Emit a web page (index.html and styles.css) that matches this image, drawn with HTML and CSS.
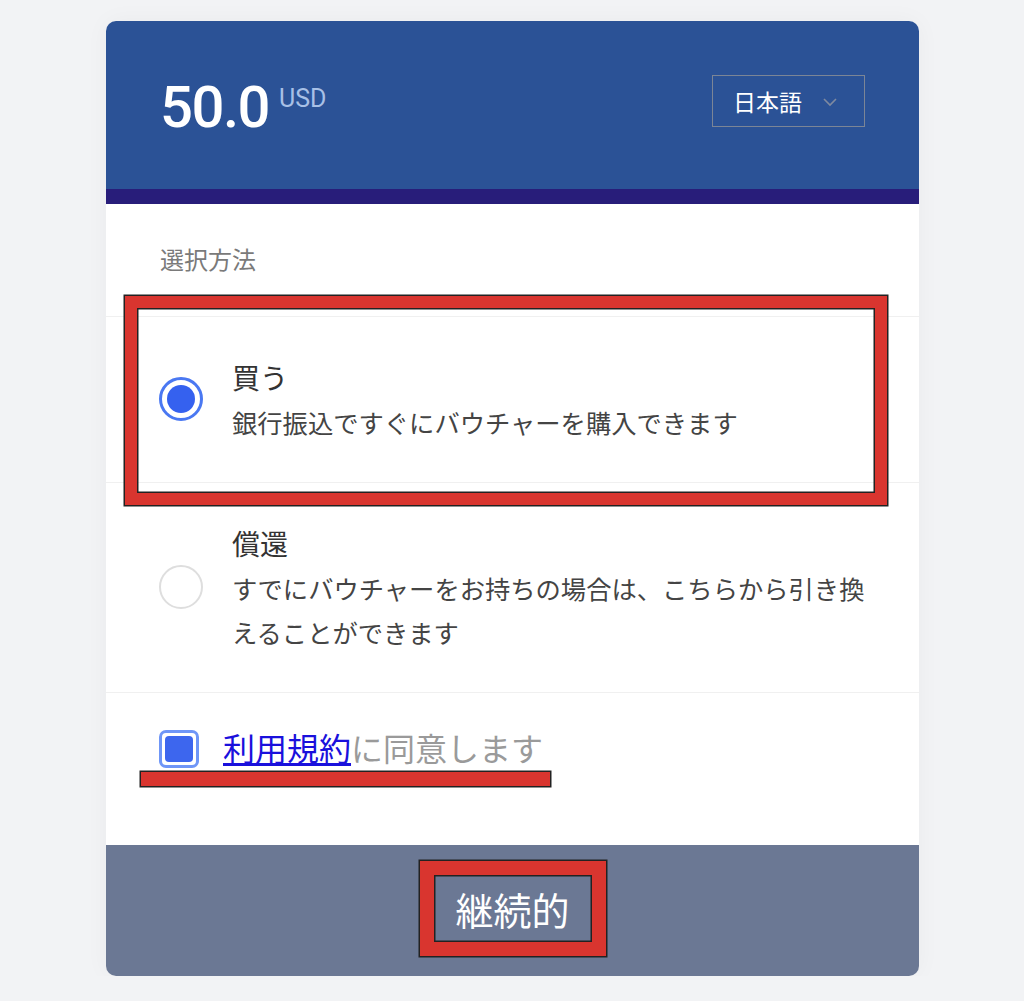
FILE: index.html
```html
<!DOCTYPE html>
<html lang="ja">
<head>
  <meta charset="UTF-8" />
  <meta name="viewport" content="width=device-width, initial-scale=1.0"/>
  <title>バウチャー</title>
  <link rel="stylesheet" href="styles.css">
</head>
<body>
  <div class="card">
    <!-- Header: amount + language -->
    <div class="header">
      <div class="amount">
        <span class="amount-value">50.0</span>
        <span class="amount-currency">USD</span>
      </div>
      <div class="lang-select">
        <span>日本語</span>
        <svg class="chevron" width="16" height="10" viewBox="0 0 16 10">
          <polyline points="2,2 8,8 14,2" fill="none" stroke="#7f8aa0" stroke-width="1.6"/>
        </svg>
      </div>
    </div>
    <div class="band"></div>

    <!-- Method choice -->
    <div class="section-label">選択方法</div>

    <div class="option">
      <div class="radio radio-checked"><div class="radio-dot"></div></div>
      <div class="option-text">
        <div class="option-title">買う</div>
        <div class="option-desc">銀行振込ですぐにバウチャーを購入できます</div>
      </div>
    </div>

    <div class="option">
      <div class="radio"></div>
      <div class="option-text">
        <div class="option-title">償還</div>
        <div class="option-desc">すでにバウチャーをお持ちの場合は、こちらから引き換えることができます</div>
      </div>
    </div>

    <div class="terms">
      <div class="checkbox"><div class="checkbox-fill"></div></div>
      <div class="terms-text"><a href="#">利用規約</a>に同意します</div>
    </div>

    <div class="footer">
      <div class="continue-btn">継続的</div>
    </div>

    <!-- annotation marks -->
    <div class="mark mark-box"></div>
    <div class="mark mark-line"></div>
  </div>
</body>
</html>
```

FILE: styles.css
```css
body {
  margin: 0;
  background: #f2f3f5;
  font-family: "Noto Sans CJK JP", "Noto Sans", sans-serif;
}

.card {
  position: relative;
  width: 813px;
  margin: 21px 0 0 106px;
  background: white;
  border-radius: 10px;
  overflow: hidden;
  box-shadow: 0 0 24px rgba(0, 0, 0, 0.04);
}

/* Header */
.header {
  height: 168px;
  background: #2b5296;
  display: flex;
  align-items: center;
  justify-content: space-between;
  padding: 0 54px 0 54px;
}

.amount {
  display: flex;
  align-items: flex-start;
  margin-top: 4px;
}

.amount-value {
  font-family: Roboto, sans-serif;
  font-size: 58px;
  font-weight: 500;
  color: white;
  line-height: 1;
  letter-spacing: -1.5px;
}

.amount-currency {
  font-family: Roboto, sans-serif;
  font-size: 25px;
  color: #a8c0e6;
  margin-left: 10px;
  margin-top: 8px;
  line-height: 1;
}

.lang-select {
  width: 131px;
  height: 50px;
  border: 1px solid #7b8596;
  display: flex;
  align-items: center;
  gap: 20px;
  padding-left: 20px;
  margin-bottom: 9px;
  color: white;
  font-size: 23px;
}

.chevron {
  margin-top: 3px;
}

.band {
  height: 15px;
  background: #281d7a;
}

/* Method choice */
.section-label {
  padding: 37px 54px 0;
  height: 75px;
  line-height: 36px;
  font-size: 24px;
  color: #7a7a7a;
  border-bottom: 1px solid #f0f0f0;
}

.option {
  display: flex;
  align-items: center;
  padding: 37px 40px 38px 53px;
  border-bottom: 1px solid #f0f0f0;
}

.radio {
  width: 40px;
  height: 40px;
  border: 2px solid #dedede;
  border-radius: 50%;
  flex-shrink: 0;
  display: flex;
  align-items: center;
  justify-content: center;
}

.radio-checked {
  border: 3px solid #4a78f2;
  width: 38px;
  height: 38px;
}

.radio-dot {
  width: 28px;
  height: 28px;
  border-radius: 50%;
  background: #3561ef;
}

.option-text {
  margin-left: 29px;
  max-width: 645px;
}

.option-title {
  font-size: 28px;
  line-height: 46px;
  color: #333;
}

.option-desc {
  font-size: 25.3px;
  line-height: 44px;
  color: #444;
}

/* Terms */
.terms {
  display: flex;
  align-items: flex-start;
  height: 152px;
  padding: 37px 0 0 53px;
  box-sizing: border-box;
}

.checkbox {
  width: 28px;
  height: 26px;
  border: 3px solid #6f96f7;
  border-radius: 7px;
  padding: 3px;
  display: flex;
}

.checkbox-fill {
  flex: 1;
  background: #3d66ee;
  border-radius: 4px;
}

.terms-text {
  margin-left: 24px;
  margin-top: -3px;
  font-size: 32px;
  line-height: 40px;
  color: #9a9a9a;
}

.terms-text a {
  color: #1a10dc;
  text-decoration: underline;
  text-underline-offset: 2px;
}

/* Footer */
.footer {
  height: 131px;
  background: #6b7894;
  display: flex;
  justify-content: center;
  align-items: center;
}

.continue-btn {
  width: 158px;
  height: 67px;
  border: 14px solid #d9352f;
  box-shadow: 0 0 0 1.5px #222, inset 0 0 0 1.5px #222;
  display: flex;
  align-items: center;
  justify-content: center;
  color: white;
  font-size: 38px;
  margin-top: -4px;
}

/* Annotation marks */
.mark {
  position: absolute;
  box-shadow: 0 0 0 1.5px #222;
}

.mark-box {
  left: 19px;
  top: 275px;
  width: 738px;
  height: 185px;
  border: 12px solid #d9352f;
  box-shadow: 0 0 0 1.5px #222, inset 0 0 0 1.5px #222;
}

.mark-line {
  left: 35px;
  top: 751px;
  width: 409px;
  height: 14px;
  background: #d9352f;
}
```
